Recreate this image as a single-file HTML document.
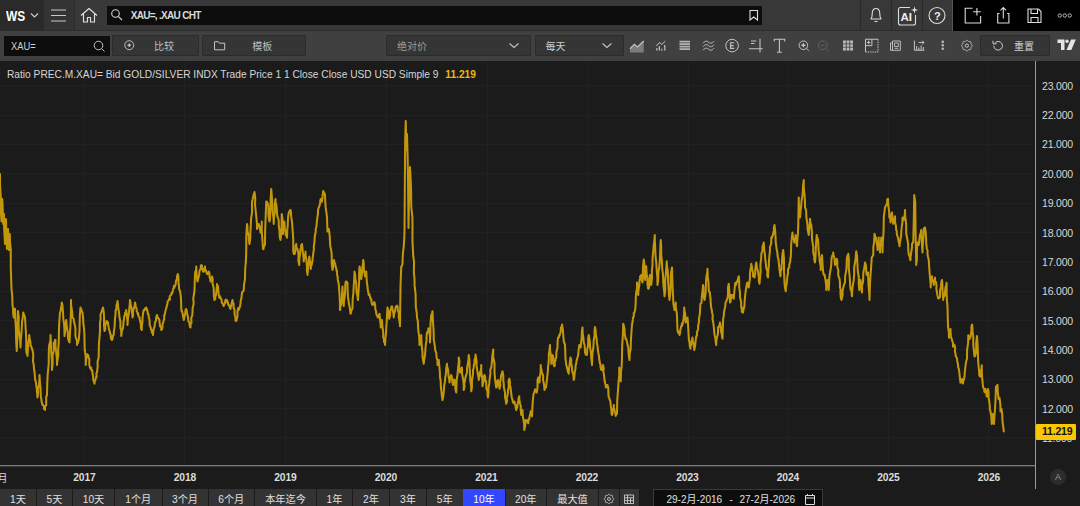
<!DOCTYPE html>
<html lang="zh"><head><meta charset="utf-8"><title>XAU=, .XAU CHT</title>
<style>
*{box-sizing:border-box;margin:0;padding:0}
html,body{width:1080px;height:506px;overflow:hidden;background:#1b1b1b}
body{position:relative;font-family:"Liberation Sans","Noto Sans CJK SC",sans-serif;color:#d8d8d8;font-size:11px}
.abs{position:absolute}
#top{position:absolute;left:0;top:0;width:1080px;height:31px;background:#383838;border-bottom:1px solid #2d2d2d}
#row2{position:absolute;left:0;top:31px;width:1080px;height:29.5px;background:#404040}
#ws{position:absolute;left:0;top:0;width:44px;height:30px;background:#2a2a2a}
#ws b{position:absolute;left:5.5px;top:7.6px;font-size:14px;color:#fff;transform:scaleX(0.85);transform-origin:0 0}
#ham{position:absolute;left:44px;top:0;width:30.5px;height:30px;background:#343434;border-right:1px solid #2c2c2c}
#search{position:absolute;left:107.2px;top:6px;width:655.3px;height:18.5px;background:#0d0d0d}
#search span{position:absolute;left:23.5px;top:3.5px;font-size:10px;color:#dadada;font-weight:bold;letter-spacing:-0.7px;white-space:nowrap}
.vd{position:absolute;top:0;width:1px;height:30px;background:#2a2a2a}
#blk{position:absolute;left:952px;top:0;width:128px;height:31px;background:#000;border-left:1px solid #555}
.inp{position:absolute;left:4px;top:35.5px;width:105.5px;height:20px;background:#0d0d0d}
.inp span{position:absolute;left:7.2px;top:5.5px;font-size:10.4px;transform:scaleX(0.9);transform-origin:0 0;color:#d0d0d0}
.btn{position:absolute;top:35px;height:20.5px;background:#353535;border:1px solid #2b2b2b;border-radius:1px;color:#bdbdbd;font-size:10px}
.btn span{position:absolute;top:2px;white-space:nowrap}
#title{position:absolute;left:7px;top:68.5px;font-size:10.2px;color:#d6d6d6;white-space:nowrap}
#title i{font-style:normal;font-weight:bold;color:#eab90f;margin-left:4px}
.yl{position:absolute;top:471.6px;width:40px;text-align:center;font-weight:bold;font-size:10.3px;color:#dcdcdc;letter-spacing:-0.1px}
.pl{position:absolute;left:1042px;width:38px;font-size:10.5px;color:#d8d8d8;height:14px;line-height:14px;letter-spacing:-0.2px}
.bb{position:absolute;top:489px;height:17px;background:#333;color:#e0e0e0;font-size:10.2px;text-align:center;line-height:22px;white-space:nowrap;overflow:hidden}
.bb.sel{background:#3347ff;color:#fff}
svg{position:absolute;left:0;top:0}
</style></head><body>
<svg width="1080" height="506" viewBox="0 0 1080 506">
<g stroke="#212121" stroke-width="1" shape-rendering="crispEdges"><line x1="84.5" y1="61" x2="84.5" y2="465" /><line x1="184.5" y1="61" x2="184.5" y2="465" /><line x1="285.5" y1="61" x2="285.5" y2="465" /><line x1="386" y1="61" x2="386" y2="465" /><line x1="487" y1="61" x2="487" y2="465" /><line x1="587.5" y1="61" x2="587.5" y2="465" /><line x1="688.5" y1="61" x2="688.5" y2="465" /><line x1="788.5" y1="61" x2="788.5" y2="465" /><line x1="888.5" y1="61" x2="888.5" y2="465" /><line x1="988.5" y1="61" x2="988.5" y2="465" /><line x1="0" y1="85.75" x2="1035" y2="85.75" /><line x1="0" y1="115.1" x2="1035" y2="115.1" /><line x1="0" y1="144.45" x2="1035" y2="144.45" /><line x1="0" y1="173.8" x2="1035" y2="173.8" /><line x1="0" y1="203.15" x2="1035" y2="203.15" /><line x1="0" y1="232.5" x2="1035" y2="232.5" /><line x1="0" y1="261.85" x2="1035" y2="261.85" /><line x1="0" y1="291.2" x2="1035" y2="291.2" /><line x1="0" y1="320.55" x2="1035" y2="320.55" /><line x1="0" y1="349.9" x2="1035" y2="349.9" /><line x1="0" y1="379.25" x2="1035" y2="379.25" /><line x1="0" y1="408.6" x2="1035" y2="408.6" /><line x1="0" y1="437.95" x2="1035" y2="437.95" /></g>
<path d="M0.00,174.00 L0.06,184.72 L0.75,196.50 L0.74,209.45 L1.50,221.50 L1.75,210.36 L2.25,199.00 L2.76,210.17 L3.25,224.00 L3.57,217.61 L4.00,214.00 L4.13,227.71 L5.00,244.00 L5.79,231.27 L6.00,219.00 L6.25,232.87 L7.00,249.00 L7.90,239.38 L8.00,229.00 L8.41,239.73 L9.00,250.00 L8.97,243.43 L9.75,234.00 L10.06,242.58 L10.75,249.00 L10.78,267.93 L11.50,289.00 L12.28,296.43 L12.50,305.00 L12.99,308.21 L13.22,313.75 L13.75,317.50 L13.77,314.73 L14.32,310.35 L15.00,308.75 L15.37,319.85 L15.95,329.32 L16.13,340.30 L16.75,351.00 L17.35,338.55 L17.65,323.57 L18.00,311.00 L18.71,317.08 L18.56,323.69 L18.78,330.44 L19.50,335.00 L20.23,341.00 L20.50,347.50 L20.87,340.21 L21.40,333.62 L21.69,329.54 L22.00,322.50 L22.25,320.29 L22.92,316.42 L23.25,312.50 L23.65,313.99 L24.53,316.02 L24.71,316.17 L25.00,317.50 L25.60,327.02 L26.28,339.61 L26.25,350.00 L26.47,352.97 L27.24,353.66 L27.50,356.00 L27.90,349.32 L28.03,344.50 L29.05,338.93 L29.25,335.00 L29.44,337.55 L30.42,342.01 L30.50,346.00 L30.85,345.54 L31.65,347.75 L32.03,349.36 L32.02,348.54 L32.50,350.00 L33.26,354.58 L33.02,361.37 L33.75,365.00 L33.93,368.20 L34.57,372.53 L35.00,377.50 L35.20,380.27 L35.76,381.01 L36.25,385.00 L36.73,388.77 L37.25,394.69 L37.50,397.50 L38.01,393.05 L37.90,389.03 L38.95,385.20 L39.37,380.62 L39.50,375.00 L39.83,381.34 L40.45,387.14 L40.75,395.00 L40.80,396.19 L41.32,399.13 L41.66,402.02 L42.50,405.00 L42.60,404.33 L43.21,405.47 L44.09,406.08 L43.85,408.68 L44.45,408.42 L45.00,410.00 L45.06,406.59 L46.24,405.05 L46.19,400.90 L46.24,396.76 L47.00,395.00 L47.23,384.53 L47.57,375.99 L48.72,363.57 L48.75,355.00 L48.87,350.08 L49.20,345.13 L50.49,340.08 L50.50,335.00 L51.05,344.84 L51.13,351.78 L51.87,360.25 L52.00,370.00 L52.69,363.22 L52.63,355.74 L53.75,350.31 L53.75,342.50 L54.46,342.93 L54.84,342.20 L55.08,339.81 L55.50,340.00 L55.45,345.82 L56.05,351.08 L56.80,358.03 L57.00,365.00 L57.39,360.74 L58.31,355.06 L58.19,349.49 L58.75,342.50 L58.92,331.66 L59.32,321.59 L60.00,312.50 L60.80,310.37 L60.86,308.52 L61.58,305.46 L61.75,302.50 L62.31,304.59 L62.84,310.40 L63.00,312.50 L63.36,319.13 L64.01,323.29 L64.40,329.62 L64.50,336.00 L64.84,333.41 L65.78,327.70 L65.52,324.67 L66.25,320.00 L66.37,323.26 L67.40,329.96 L67.86,332.06 L68.00,337.50 L68.52,340.19 L68.79,339.55 L68.69,340.14 L69.50,342.50 L70.01,333.29 L70.64,321.33 L70.96,310.43 L71.00,300.00 L71.11,305.35 L71.56,308.01 L72.20,312.35 L72.50,317.50 L72.86,318.03 L73.74,318.89 L73.77,320.81 L74.25,322.50 L75.01,325.96 L75.41,328.69 L75.46,332.15 L75.39,335.43 L75.93,338.39 L76.88,340.30 L77.00,345.00 L77.41,342.77 L77.93,343.18 L78.33,340.73 L78.75,340.00 L79.44,332.04 L79.68,322.57 L79.86,314.87 L80.50,307.50 L80.91,309.32 L81.53,309.69 L81.65,311.74 L82.10,311.84 L82.50,312.50 L83.07,318.04 L83.33,323.36 L84.10,328.93 L84.44,335.10 L84.50,340.00 L84.70,349.66 L85.73,356.85 L85.75,365.00 L85.84,362.69 L86.53,357.20 L87.00,355.00 L87.20,354.34 L88.03,354.97 L88.67,357.73 L88.75,357.50 L89.36,359.80 L89.26,364.65 L90.00,367.50 L90.82,369.15 L91.21,367.66 L91.19,368.69 L91.90,370.97 L92.00,370.00 L92.36,371.28 L92.69,374.63 L93.09,375.96 L93.23,379.83 L94.03,381.62 L94.50,383.75 L94.77,380.43 L95.34,380.37 L96.19,376.82 L96.59,377.12 L96.37,373.19 L97.00,372.50 L97.69,366.12 L97.54,361.81 L98.68,357.27 L98.75,352.50 L98.95,343.46 L99.96,331.45 L100.00,322.50 L100.60,319.38 L100.44,314.60 L101.25,312.50 L101.62,311.81 L102.52,308.72 L102.83,309.15 L103.00,307.50 L103.70,312.13 L104.08,317.95 L103.98,324.99 L104.50,331.00 L105.32,329.03 L105.04,326.05 L105.58,324.71 L106.25,322.50 L106.38,321.33 L106.86,321.15 L107.39,321.94 L108.00,322.50 L108.21,325.28 L108.51,326.50 L108.77,328.04 L109.16,329.75 L110.00,332.50 L110.45,334.70 L110.78,334.57 L110.85,338.30 L111.54,339.46 L112.00,340.00 L112.74,338.11 L112.88,335.93 L113.75,334.94 L113.75,332.50 L114.49,327.65 L114.75,324.37 L114.93,319.09 L115.50,315.00 L115.57,310.86 L116.52,308.11 L116.40,305.87 L117.41,302.55 L117.50,301.00 L118.05,305.41 L118.07,306.95 L118.66,310.28 L119.05,313.17 L119.50,317.50 L120.35,321.41 L120.42,328.17 L121.23,330.61 L121.25,336.00 L121.56,333.30 L122.02,330.25 L122.56,329.55 L123.00,327.50 L123.40,324.10 L123.59,321.01 L124.11,318.77 L124.17,316.13 L125.00,315.00 L125.18,312.75 L125.86,311.92 L126.25,310.00 L126.81,315.75 L127.42,320.65 L127.50,325.00 L127.76,320.50 L128.02,318.12 L128.88,313.17 L129.47,306.96 L129.70,305.34 L130.00,300.00 L130.70,303.62 L130.85,304.75 L131.55,308.76 L131.96,312.58 L132.44,314.84 L132.50,317.50 L133.09,315.55 L132.91,311.69 L133.62,308.90 L134.47,306.31 L134.70,305.18 L135.00,302.50 L135.58,304.55 L135.39,305.80 L136.47,308.39 L136.70,309.18 L136.69,311.31 L137.50,312.50 L137.68,314.21 L138.09,313.22 L138.43,316.19 L139.53,317.22 L139.50,317.50 L139.84,319.98 L140.57,322.44 L140.96,325.80 L140.92,327.93 L141.75,330.00 L141.93,324.94 L142.37,322.73 L142.51,318.20 L143.14,312.68 L143.75,310.00 L144.34,310.10 L144.40,309.69 L144.97,308.80 L145.07,308.23 L145.56,309.10 L146.25,307.50 L147.06,310.60 L147.05,309.39 L147.92,313.46 L147.71,314.02 L148.73,314.96 L148.75,317.50 L149.24,318.72 L149.60,320.59 L149.67,325.11 L150.42,326.79 L151.02,329.08 L151.25,330.00 L152.05,330.44 L151.70,332.46 L152.56,332.26 L153.00,335.00 L153.22,332.35 L153.66,328.92 L154.51,326.95 L154.83,323.51 L155.00,322.50 L155.06,322.02 L155.99,320.78 L156.01,319.20 L156.50,316.12 L157.00,315.00 L157.50,317.75 L157.77,317.08 L157.84,318.08 L158.97,318.81 L159.48,320.61 L159.50,322.50 L159.73,323.62 L160.10,326.28 L161.22,327.75 L161.25,330.00 L161.95,329.49 L162.46,327.06 L162.54,326.32 L162.51,323.99 L163.29,322.36 L163.75,320.00 L164.30,318.67 L164.18,315.19 L164.66,315.03 L165.28,311.58 L166.05,308.98 L166.25,307.50 L166.45,307.68 L166.90,305.47 L167.40,303.92 L167.61,301.50 L168.70,300.37 L168.75,300.00 L168.91,299.16 L170.03,299.55 L169.68,297.35 L170.05,295.74 L170.47,295.36 L171.25,295.00 L171.45,293.05 L172.43,292.88 L172.42,292.25 L172.94,290.07 L173.19,288.80 L173.75,288.00 L173.95,285.89 L174.21,287.80 L175.07,285.61 L175.09,285.89 L175.75,284.00 L175.92,281.31 L176.50,279.70 L177.26,279.36 L176.92,277.12 L177.75,274.00 L178.36,276.76 L178.56,283.52 L179.00,286.50 L179.05,289.01 L180.00,291.00 L180.80,296.17 L181.15,302.98 L181.25,307.50 L181.44,311.00 L181.77,310.49 L182.66,313.82 L183.12,317.16 L183.57,318.36 L183.75,320.00 L184.21,318.04 L184.84,314.95 L185.38,313.70 L185.24,313.10 L185.61,309.72 L186.25,309.00 L186.87,311.53 L186.74,312.09 L187.64,315.45 L188.00,317.50 L188.17,318.83 L188.39,321.14 L189.21,321.90 L189.80,325.54 L190.06,326.98 L190.50,327.50 L190.67,323.70 L191.48,322.88 L191.27,317.92 L192.26,315.49 L192.50,312.50 L192.68,307.76 L193.68,304.00 L193.28,298.18 L194.03,294.01 L194.50,290.00 L195.00,274.00 L195.14,272.05 L196.05,269.89 L196.25,266.50 L196.40,271.51 L196.91,277.91 L197.50,281.50 L197.70,280.59 L198.61,276.91 L199.22,275.26 L199.25,274.00 L199.37,272.19 L199.98,269.57 L200.85,269.10 L200.75,265.74 L201.25,265.00 L202.11,265.76 L201.72,267.18 L202.47,268.56 L203.00,271.50 L203.75,271.69 L204.25,270.20 L204.05,269.79 L204.99,266.56 L205.00,266.50 L204.98,268.74 L205.69,269.99 L206.05,270.62 L206.15,271.51 L207.00,274.00 L207.30,272.71 L207.54,274.12 L208.05,273.52 L208.75,271.50 L209.48,273.57 L209.56,277.47 L210.04,277.65 L210.50,281.50 L211.25,279.87 L211.13,278.08 L211.20,278.94 L212.00,276.50 L212.72,279.36 L212.46,283.55 L212.92,284.48 L213.75,289.00 L213.91,295.76 L214.50,300.00 L215.30,298.87 L215.17,295.77 L215.92,295.75 L216.25,292.50 L216.82,287.54 L217.00,284.00 L217.21,285.45 L218.06,286.51 L218.25,290.00 L218.75,295.00 L219.29,296.92 L219.16,297.66 L219.98,296.20 L220.83,299.04 L220.61,297.99 L221.25,299.00 L221.66,299.96 L221.80,302.62 L222.71,303.41 L223.16,304.63 L223.18,305.16 L223.75,306.00 L224.04,304.46 L224.20,304.85 L225.23,302.09 L225.02,301.24 L225.88,299.60 L226.25,300.00 L227.10,300.31 L227.52,302.82 L227.13,301.79 L227.92,302.12 L228.29,304.80 L228.75,305.00 L229.11,305.20 L229.78,307.36 L230.37,308.74 L230.50,309.00 L230.56,307.69 L231.11,306.42 L231.59,303.80 L231.83,302.51 L232.50,300.00 L232.67,301.74 L233.65,303.96 L233.54,307.73 L234.54,309.69 L234.50,312.50 L234.70,314.65 L235.51,317.68 L235.45,320.35 L236.25,321.00 L236.97,318.17 L237.50,316.52 L237.38,311.37 L238.00,310.00 L238.12,308.06 L238.87,309.82 L239.09,308.89 L239.55,307.90 L240.00,306.00 L240.69,302.53 L240.52,301.84 L241.42,298.04 L241.75,295.00 L242.03,293.15 L242.28,291.92 L243.04,291.26 L243.08,291.45 L243.75,290.00 L244.01,284.87 L244.30,283.20 L245.00,279.00 L245.15,269.27 L245.88,261.55 L246.25,251.50 L246.27,236.44 L247.00,224.00 L247.46,227.02 L247.47,231.08 L248.25,234.00 L248.84,236.32 L248.89,240.40 L249.50,244.00 L250.32,237.59 L250.39,231.77 L250.75,226.50 L251.09,218.57 L252.03,212.59 L252.00,204.00 L252.14,201.09 L252.57,199.68 L253.25,196.50 L254.03,193.52 L254.37,193.27 L254.50,192.00 L255.26,198.22 L255.03,204.88 L255.75,211.50 L256.21,215.88 L256.95,223.59 L257.00,229.00 L257.55,226.52 L257.88,226.11 L258.12,224.19 L258.75,224.00 L259.57,226.25 L259.62,227.20 L260.48,231.48 L260.50,232.75 L260.58,228.09 L261.76,226.58 L261.75,221.50 L261.76,230.61 L262.48,241.11 L263.00,249.00 L263.51,249.21 L263.49,247.97 L263.95,246.86 L264.91,244.71 L265.00,244.00 L265.13,230.82 L265.74,214.82 L266.25,201.50 L266.58,202.18 L266.90,201.62 L267.92,204.05 L268.00,204.00 L268.43,207.00 L268.33,213.52 L268.78,218.14 L269.50,221.50 L270.00,219.00 L270.46,209.30 L270.66,199.38 L271.25,189.00 L271.74,195.43 L272.23,202.11 L272.50,209.00 L272.86,213.84 L273.44,217.57 L273.75,224.00 L273.95,217.72 L274.88,212.29 L274.77,205.12 L275.50,199.00 L275.52,202.04 L276.19,204.14 L276.57,207.15 L277.00,211.50 L277.02,214.03 L277.50,216.91 L278.56,219.70 L278.75,221.50 L278.79,226.16 L279.52,230.76 L279.74,236.73 L280.50,240.00 L281.36,232.40 L281.62,223.36 L281.75,214.00 L282.60,219.75 L282.99,227.31 L283.00,234.00 L283.12,231.08 L284.22,226.53 L284.25,221.50 L284.53,223.53 L284.78,228.94 L285.50,231.50 L285.67,234.25 L285.93,235.57 L287.00,236.19 L287.00,237.75 L287.22,230.62 L287.71,225.27 L288.03,217.61 L288.75,212.75 L289.58,211.05 L289.98,211.91 L290.32,209.69 L290.50,210.00 L290.90,211.72 L291.12,216.16 L291.67,219.74 L292.00,221.50 L292.76,231.74 L293.28,240.31 L293.25,251.50 L293.57,252.72 L293.87,254.06 L294.50,254.00 L295.01,252.97 L295.61,248.58 L295.52,246.33 L296.25,244.00 L296.26,246.40 L296.86,248.29 L297.50,249.00 L298.37,253.42 L298.52,257.26 L298.36,260.44 L299.25,265.00 L299.35,258.27 L300.02,254.68 L300.50,249.00 L301.23,247.79 L301.00,245.40 L301.20,245.71 L302.00,244.00 L302.31,246.88 L302.75,251.57 L303.39,256.30 L303.75,261.50 L303.92,259.27 L304.60,256.87 L305.46,252.90 L305.50,251.50 L305.58,255.43 L306.42,259.69 L306.95,266.71 L306.89,270.01 L307.50,275.00 L308.07,268.91 L308.24,265.94 L308.76,261.56 L309.25,256.50 L309.84,260.94 L310.36,262.00 L310.40,264.51 L310.75,269.00 L310.95,266.84 L311.88,263.93 L312.11,261.91 L312.50,261.50 L312.58,258.82 L313.40,252.60 L313.83,249.52 L313.81,246.44 L314.50,241.50 L314.74,236.76 L315.68,231.81 L315.75,229.00 L316.38,226.72 L316.93,221.27 L317.03,220.36 L317.50,216.50 L317.89,214.73 L318.02,210.68 L318.40,208.20 L319.25,206.50 L319.85,204.13 L320.31,203.34 L320.16,201.51 L320.75,199.00 L321.11,199.99 L321.60,201.53 L322.00,201.50 L322.54,197.30 L322.58,195.90 L323.25,191.00 L323.25,193.14 L323.89,192.28 L324.96,194.73 L325.00,195.00 L325.26,201.24 L325.68,207.14 L326.25,211.50 L327.03,217.38 L327.26,225.23 L327.50,231.50 L328.35,231.16 L328.64,229.74 L328.75,229.00 L329.49,233.76 L329.79,237.14 L330.00,241.50 L330.26,246.09 L330.99,249.39 L331.68,253.36 L331.75,259.00 L331.70,263.43 L332.50,270.00 L333.26,266.32 L332.93,264.53 L333.21,261.09 L334.00,260.00 L334.50,262.20 L334.96,263.84 L335.21,263.57 L335.50,266.50 L336.16,267.97 L336.60,271.21 L336.96,270.82 L337.00,274.00 L337.84,277.74 L337.61,277.82 L337.89,280.34 L338.75,284.00 L339.45,293.71 L339.88,301.74 L340.00,310.00 L340.25,308.52 L340.51,305.05 L341.05,305.15 L341.75,302.50 L342.06,293.96 L342.50,286.50 L342.70,291.56 L343.53,298.85 L343.75,306.00 L343.99,300.70 L344.55,297.59 L345.06,292.35 L345.27,284.99 L345.75,281.50 L346.43,281.62 L346.81,281.67 L346.81,282.55 L347.50,282.75 L347.55,290.42 L348.04,296.88 L348.75,302.50 L348.92,303.82 L350.06,308.91 L350.05,309.45 L350.50,313.75 L351.17,312.47 L351.30,310.30 L352.00,309.54 L352.50,308.03 L352.50,307.50 L352.64,299.65 L353.30,293.70 L353.82,284.73 L354.36,277.44 L354.50,271.50 L355.20,275.22 L355.25,278.13 L355.72,280.58 L356.25,284.00 L356.32,289.17 L356.70,293.17 L357.35,295.12 L358.00,300.00 L358.38,292.83 L359.10,282.89 L359.09,274.08 L359.50,266.50 L360.17,269.72 L360.51,273.51 L360.66,275.42 L361.25,279.00 L361.96,274.17 L362.27,271.89 L362.39,266.61 L362.92,264.62 L363.25,260.00 L363.65,263.00 L363.89,269.41 L364.38,271.45 L365.00,276.50 L365.73,275.44 L365.52,272.13 L366.25,271.50 L366.51,275.74 L366.78,281.57 L367.50,286.50 L367.64,288.82 L368.54,293.59 L368.75,295.00 L369.60,294.43 L369.52,295.05 L370.33,298.33 L370.50,297.50 L370.84,299.70 L371.42,299.59 L371.44,300.82 L371.68,303.17 L372.50,305.00 L373.16,304.20 L373.30,304.58 L373.67,303.90 L374.19,301.93 L374.50,302.50 L375.15,305.03 L375.31,309.35 L376.04,311.16 L376.25,313.75 L376.44,314.45 L377.47,316.29 L377.74,317.38 L378.00,317.50 L378.54,317.62 L378.71,316.05 L379.24,314.13 L379.50,313.75 L379.84,317.13 L380.53,323.76 L380.75,327.50 L380.94,325.39 L381.54,322.27 L382.00,320.00 L382.34,326.20 L383.22,332.19 L383.25,337.50 L383.83,338.42 L384.02,342.08 L384.99,343.09 L385.00,345.00 L385.46,337.78 L386.09,332.32 L386.25,327.50 L386.68,322.16 L387.15,312.97 L387.50,307.50 L388.13,310.44 L388.50,313.16 L388.83,316.92 L389.25,318.75 L390.07,315.56 L390.25,312.05 L390.50,310.00 L391.11,308.74 L391.69,306.99 L391.23,306.75 L392.00,306.25 L392.35,308.39 L392.80,310.41 L393.49,314.45 L393.75,317.50 L393.98,314.56 L394.84,311.67 L395.09,311.32 L395.50,307.50 L396.17,306.41 L396.04,306.68 L396.95,305.64 L397.22,307.43 L397.50,306.25 L397.97,309.91 L398.75,312.93 L398.75,317.50 L399.29,319.98 L399.87,324.29 L400.00,326.25 L400.23,306.24 L400.50,286.56 L401.25,266.50 L401.54,266.67 L401.87,265.89 L402.50,264.00 L402.69,257.80 L403.05,252.11 L403.75,246.50 L404.32,237.51 L404.50,231.50 L405.00,164.00 L405.15,141.84 L405.75,121.00 L406.11,134.91 L406.50,150.00 L407.00,134.00 L407.62,156.79 L408.00,180.00 L408.50,228.00 L408.88,206.98 L409.50,185.00 L410.00,167.00 L410.74,181.29 L411.13,191.67 L411.25,206.00 L411.92,213.22 L412.38,216.92 L412.50,224.00 L412.44,240.40 L413.25,256.00 L414.07,262.20 L413.86,271.80 L414.50,279.00 L414.60,285.64 L415.58,293.87 L415.75,302.50 L415.85,307.04 L416.85,313.71 L417.00,317.50 L417.77,320.67 L418.09,326.16 L418.25,330.00 L419.02,335.51 L419.39,340.86 L419.50,345.00 L420.11,341.59 L420.59,340.09 L421.16,337.32 L421.25,335.00 L421.45,341.00 L421.76,345.87 L422.50,352.50 L422.52,356.23 L423.01,359.90 L423.75,363.75 L424.19,359.66 L424.95,355.74 L425.37,350.08 L425.50,347.50 L425.93,343.65 L426.56,340.50 L426.55,335.87 L427.00,332.50 L427.06,332.94 L428.00,331.04 L428.41,328.27 L428.75,328.75 L429.56,333.88 L430.02,337.41 L430.00,342.50 L430.40,333.37 L430.41,325.36 L431.25,315.00 L431.78,314.40 L432.41,312.02 L432.50,311.25 L432.89,320.43 L433.58,330.49 L433.75,340.00 L434.11,341.63 L434.63,344.77 L435.00,347.50 L435.23,350.15 L435.75,351.82 L436.25,352.50 L436.46,356.68 L437.51,360.85 L437.50,365.00 L438.18,363.80 L438.17,361.16 L438.75,360.00 L439.24,365.23 L439.84,372.07 L440.00,377.50 L440.62,380.29 L440.87,386.99 L441.25,390.00 L441.49,391.98 L441.80,395.19 L442.50,400.00 L443.04,397.51 L443.64,392.97 L443.91,389.98 L444.25,385.00 L444.74,382.85 L445.09,380.59 L445.12,378.04 L445.75,375.00 L446.13,371.75 L446.22,368.29 L447.00,363.75 L447.00,365.71 L448.21,370.41 L448.25,372.50 L448.55,376.30 L449.34,380.13 L449.50,382.50 L449.72,380.81 L450.30,378.16 L450.75,376.33 L451.25,375.00 L452.08,377.93 L452.19,378.66 L452.22,381.12 L453.00,385.00 L453.44,384.68 L453.70,383.76 L454.02,379.79 L454.50,380.00 L455.33,383.40 L455.35,387.69 L455.45,389.11 L456.25,392.50 L456.41,387.10 L456.65,379.79 L457.50,375.00 L458.08,367.68 L458.75,362.20 L458.75,357.50 L459.50,361.26 L459.15,366.39 L460.00,372.50 L460.17,372.16 L460.52,371.20 L461.45,368.15 L461.92,369.14 L462.00,367.50 L462.06,373.81 L463.06,379.14 L463.70,384.26 L463.75,390.00 L464.61,386.14 L464.19,384.40 L465.20,379.17 L465.50,377.50 L465.50,377.20 L466.46,374.43 L466.95,372.75 L467.00,372.50 L467.04,368.08 L467.94,363.35 L468.47,359.19 L468.75,355.00 L469.43,360.60 L469.71,367.92 L470.00,375.00 L470.34,380.81 L471.09,385.49 L471.25,391.25 L471.94,387.27 L471.94,380.83 L472.99,373.99 L473.00,370.00 L473.71,368.03 L473.93,364.33 L474.55,363.68 L474.49,359.97 L475.43,356.87 L475.50,354.50 L476.07,357.73 L476.66,362.01 L476.50,366.22 L476.89,367.41 L477.50,372.50 L477.99,374.77 L478.68,378.45 L478.75,380.00 L479.47,376.13 L479.91,375.94 L479.80,372.72 L480.69,371.05 L481.21,368.05 L481.25,365.00 L481.29,371.62 L482.35,379.33 L482.50,386.25 L483.13,383.10 L483.06,383.05 L483.86,379.82 L483.84,377.15 L484.50,375.00 L485.16,376.76 L485.34,380.87 L486.09,381.26 L486.25,385.00 L486.45,388.94 L487.48,391.49 L487.58,395.53 L488.00,397.50 L488.46,393.05 L488.47,387.82 L489.31,383.42 L489.50,380.00 L490.00,376.46 L490.39,373.46 L490.40,369.57 L491.25,367.50 L491.54,365.39 L492.17,359.12 L492.14,357.56 L492.71,353.39 L493.25,349.50 L493.24,357.23 L494.52,363.43 L494.50,372.50 L494.93,377.35 L495.16,380.20 L495.75,384.59 L496.25,387.50 L496.93,386.96 L497.54,384.71 L497.15,381.14 L498.00,380.00 L498.09,381.29 L498.35,383.13 L499.46,386.73 L499.50,388.75 L500.34,385.19 L499.98,383.10 L500.72,378.73 L501.25,375.00 L502.08,372.61 L502.14,371.77 L502.50,371.25 L503.33,375.84 L503.24,380.09 L503.75,383.75 L503.86,387.35 L505.03,392.65 L505.00,395.00 L505.00,397.08 L505.70,400.10 L506.25,403.75 L507.05,401.52 L506.72,397.89 L507.75,394.30 L508.00,390.00 L508.85,386.69 L508.51,381.17 L509.25,378.75 L510.02,382.33 L509.82,384.91 L510.61,387.46 L510.75,390.00 L511.03,391.32 L511.29,394.27 L511.76,397.44 L512.50,400.00 L512.58,399.97 L512.86,402.03 L513.43,402.90 L514.48,401.61 L514.50,403.75 L515.33,404.47 L515.72,407.98 L515.77,407.36 L516.25,410.00 L517.05,407.12 L517.20,407.69 L517.50,405.00 L517.79,402.67 L518.35,401.59 L518.49,398.82 L519.25,396.25 L519.23,398.85 L520.05,403.77 L520.71,405.50 L520.75,410.00 L521.25,415.00 L521.59,412.63 L521.88,410.63 L522.50,410.00 L522.79,416.02 L523.37,419.00 L524.18,424.45 L524.25,430.00 L525.06,426.34 L525.36,423.67 L525.12,423.00 L525.75,420.00 L526.00,420.56 L526.36,420.52 L527.50,421.47 L527.50,422.50 L528.32,423.06 L528.19,419.42 L528.41,420.88 L529.25,418.75 L529.44,417.55 L529.56,416.44 L530.23,414.05 L530.75,411.25 L530.72,411.84 L531.61,415.58 L532.00,416.25 L532.36,408.64 L532.58,404.15 L533.25,396.25 L533.36,394.90 L534.37,392.17 L534.29,392.20 L535.00,390.00 L535.07,389.36 L535.87,391.58 L536.05,391.20 L536.75,392.50 L537.31,389.09 L537.57,385.93 L537.48,380.36 L538.25,377.50 L538.58,379.86 L538.68,381.50 L539.50,382.50 L539.77,377.60 L540.66,371.86 L540.75,365.00 L540.75,367.17 L541.60,370.61 L541.85,372.68 L542.50,373.75 L543.20,376.06 L543.00,379.85 L543.79,383.11 L544.12,385.26 L544.50,390.00 L544.95,388.59 L545.57,386.36 L546.14,387.20 L546.25,385.00 L546.88,380.09 L547.35,375.89 L547.90,370.56 L548.00,367.50 L548.40,364.36 L548.83,358.54 L548.77,354.11 L549.35,350.90 L550.00,345.00 L550.06,350.30 L551.12,356.75 L551.25,363.75 L551.30,359.42 L551.81,358.51 L552.50,355.00 L553.03,356.37 L553.40,360.85 L553.46,364.05 L554.25,366.25 L554.85,365.61 L554.71,361.39 L555.45,360.98 L555.51,358.59 L556.25,357.50 L556.36,352.22 L557.45,347.78 L557.63,341.44 L558.00,337.50 L558.10,337.49 L559.19,336.98 L559.13,334.92 L559.62,335.52 L560.00,333.75 L560.80,331.59 L560.65,330.88 L561.05,327.42 L562.03,326.16 L562.00,324.50 L562.81,329.60 L563.19,333.82 L563.33,335.72 L563.75,341.25 L564.56,343.87 L564.51,343.00 L565.00,345.00 L565.29,352.06 L565.45,358.43 L566.25,365.00 L566.67,366.26 L566.76,366.48 L567.75,370.78 L568.04,372.14 L568.68,373.22 L568.75,373.75 L568.77,370.84 L569.41,366.05 L569.86,362.10 L570.50,357.50 L571.26,360.13 L571.03,362.86 L571.57,365.06 L572.00,367.50 L572.25,371.98 L573.01,373.17 L573.40,375.74 L573.75,380.00 L574.20,378.56 L574.59,373.68 L574.75,371.66 L575.50,368.75 L575.57,365.37 L576.22,363.63 L576.47,361.36 L577.14,358.51 L577.50,357.50 L578.04,355.39 L578.51,351.46 L579.00,347.23 L579.25,345.00 L579.67,345.51 L579.97,346.59 L580.14,346.31 L580.75,347.50 L581.20,341.66 L581.70,337.15 L581.93,331.04 L582.50,327.50 L582.68,333.59 L583.33,337.67 L583.75,342.50 L584.61,345.19 L584.83,348.55 L585.00,352.50 L585.01,351.98 L585.75,354.61 L586.10,352.69 L586.81,354.32 L587.00,355.00 L587.19,348.83 L588.09,346.38 L588.17,338.96 L588.75,335.00 L589.35,338.31 L589.94,342.85 L590.08,347.21 L590.50,350.00 L591.09,354.47 L591.23,358.28 L591.81,362.10 L592.00,365.00 L592.10,359.99 L592.43,353.61 L593.39,347.05 L593.75,340.00 L594.58,335.66 L594.51,331.55 L595.00,327.00 L595.77,331.10 L595.77,333.82 L596.27,336.61 L596.75,340.00 L596.94,343.79 L597.55,345.92 L597.71,349.03 L598.25,352.50 L599.00,356.17 L599.07,358.12 L599.39,359.99 L600.00,363.75 L600.51,364.25 L600.50,367.12 L601.15,369.70 L601.75,370.00 L602.47,369.36 L602.32,368.04 L603.00,365.00 L603.74,368.53 L603.34,371.03 L604.12,376.44 L604.50,380.00 L605.16,383.76 L605.78,385.12 L605.75,387.50 L606.20,386.93 L606.53,386.81 L607.15,385.20 L607.50,385.00 L608.32,388.72 L608.36,393.86 L608.75,397.50 L609.07,397.55 L609.68,399.70 L610.40,401.47 L610.50,402.50 L610.86,407.02 L611.36,408.57 L611.48,413.36 L612.00,415.00 L612.72,412.59 L612.71,409.01 L613.61,408.94 L613.75,405.00 L613.84,407.54 L614.80,411.18 L615.50,413.46 L615.50,415.00 L615.80,415.85 L616.06,413.34 L616.63,414.10 L617.00,413.75 L617.21,400.94 L618.00,390.00 L618.51,382.89 L619.28,374.56 L619.25,367.50 L619.21,371.35 L620.26,374.11 L620.55,377.23 L620.75,381.25 L620.99,371.85 L621.66,366.44 L622.00,357.50 L622.14,346.75 L622.88,334.99 L623.25,323.75 L623.82,325.86 L624.57,329.47 L624.48,332.41 L625.00,335.00 L625.09,335.36 L625.45,338.78 L625.90,338.30 L626.89,341.07 L627.00,342.50 L627.69,344.51 L627.39,344.52 L628.25,347.50 L628.51,352.48 L628.95,356.48 L629.50,360.00 L629.71,354.01 L630.70,348.80 L630.75,345.00 L631.03,338.58 L631.48,331.52 L632.00,325.00 L632.85,319.91 L633.00,317.50 L633.79,316.50 L633.86,314.82 L633.71,313.00 L634.50,312.50 L635.24,309.21 L635.69,302.78 L635.75,298.75 L635.99,294.28 L637.00,288.22 L637.00,282.50 L637.82,286.65 L637.73,290.06 L638.25,295.00 L638.42,290.66 L639.42,284.43 L639.50,280.00 L640.20,278.70 L640.08,276.73 L640.53,275.83 L641.25,275.00 L641.48,278.91 L641.74,280.18 L642.50,282.50 L642.81,274.93 L642.94,266.88 L643.75,259.50 L644.46,265.20 L644.35,272.72 L645.00,280.00 L645.22,274.49 L645.41,270.04 L646.25,266.25 L646.52,272.99 L647.27,277.72 L647.50,285.00 L647.71,285.03 L648.00,288.51 L648.75,288.75 L649.47,284.00 L649.28,280.50 L650.00,275.00 L650.62,277.89 L651.25,281.30 L651.25,285.00 L652.07,277.46 L651.84,271.68 L652.50,265.00 L652.58,258.19 L653.12,252.29 L653.75,245.00 L654.33,241.20 L654.75,235.00 L654.90,241.48 L655.24,249.07 L655.54,256.74 L656.25,262.50 L656.71,270.04 L657.33,276.81 L657.50,285.00 L658.08,280.28 L658.20,276.45 L658.44,271.54 L659.25,267.50 L659.94,259.66 L660.15,253.21 L660.43,245.70 L660.75,240.00 L661.17,247.08 L661.19,254.39 L662.00,262.50 L662.17,268.60 L663.03,274.71 L663.25,282.50 L663.58,286.43 L664.33,292.89 L664.50,296.25 L665.24,290.31 L665.13,280.98 L665.75,275.00 L666.41,266.71 L666.75,261.25 L667.03,266.32 L667.73,270.15 L668.00,275.00 L668.15,281.85 L668.62,288.54 L668.84,294.14 L669.50,300.00 L670.29,293.01 L670.52,289.04 L670.75,282.50 L670.75,276.12 L671.31,271.49 L672.00,267.50 L672.31,277.74 L672.66,287.78 L673.25,300.00 L673.38,303.75 L674.15,307.69 L674.50,310.00 L674.70,308.15 L675.50,304.80 L675.75,302.50 L675.72,307.05 L676.83,313.50 L677.00,317.50 L677.50,330.00 L677.49,330.36 L678.40,333.06 L678.47,331.64 L679.36,332.83 L679.50,335.00 L680.31,331.88 L680.00,331.25 L680.72,328.83 L681.25,326.00 L681.98,325.87 L681.76,323.59 L682.49,324.71 L683.00,322.50 L683.59,318.79 L684.13,313.22 L684.25,307.50 L684.58,311.63 L685.18,313.66 L685.39,318.54 L685.75,322.50 L685.85,322.53 L686.21,320.79 L687.34,319.36 L687.50,317.50 L687.96,323.45 L688.46,332.24 L688.75,337.50 L688.96,340.44 L689.50,341.80 L689.79,345.67 L690.50,348.75 L690.57,345.93 L691.45,344.87 L691.47,341.21 L692.05,339.80 L692.50,337.50 L692.80,341.93 L693.72,343.15 L693.87,345.80 L694.25,350.00 L694.93,346.75 L695.28,344.64 L695.60,340.76 L695.82,339.30 L696.25,336.25 L696.99,335.49 L696.94,331.97 L697.30,331.14 L698.00,330.00 L698.20,325.18 L698.98,322.09 L698.85,319.34 L699.57,315.47 L700.00,312.50 L700.14,308.34 L700.43,303.72 L701.54,302.73 L701.75,297.50 L702.36,292.09 L702.64,290.61 L703.00,285.00 L703.36,287.58 L703.47,292.30 L703.68,296.38 L704.50,300.00 L705.05,297.09 L705.73,292.05 L705.75,287.50 L705.96,283.27 L706.30,277.36 L707.31,272.02 L707.50,268.75 L707.73,276.85 L708.46,281.97 L708.75,290.00 L709.55,292.70 L709.84,292.34 L710.00,295.00 L710.66,299.74 L710.59,301.98 L711.15,307.23 L711.75,310.00 L712.17,312.73 L712.80,315.86 L712.46,318.59 L713.25,322.50 L713.87,327.70 L714.25,332.50 L714.84,335.96 L715.45,338.72 L715.45,339.98 L715.67,341.47 L716.25,345.00 L716.31,341.49 L716.82,338.06 L717.99,333.58 L718.00,330.00 L717.96,327.52 L718.47,327.32 L718.68,326.92 L719.50,325.00 L720.00,322.50 L720.74,326.86 L720.77,330.03 L721.25,332.50 L721.81,333.93 L722.01,336.71 L722.50,338.75 L722.82,327.64 L723.25,317.50 L723.98,315.50 L723.82,313.71 L724.51,309.39 L725.00,307.50 L725.30,305.82 L725.50,302.84 L726.28,301.35 L726.75,300.00 L727.52,298.16 L727.98,294.60 L728.06,291.64 L727.95,287.93 L728.75,283.75 L729.26,290.53 L729.65,295.64 L730.00,302.50 L730.38,302.36 L730.62,299.94 L731.55,297.53 L731.32,295.08 L732.00,295.00 L732.39,296.47 L733.02,295.63 L733.39,297.43 L733.75,298.75 L734.19,293.92 L734.49,289.78 L735.00,285.00 L735.11,283.34 L735.84,285.17 L736.53,282.34 L736.24,282.26 L737.00,282.50 L737.21,281.03 L737.92,279.34 L738.38,276.99 L738.75,276.25 L739.18,280.51 L739.21,287.35 L740.00,292.50 L740.03,297.22 L741.16,302.32 L741.25,307.50 L741.86,309.32 L741.74,311.60 L742.50,312.50 L743.10,312.47 L743.60,308.31 L743.40,307.68 L744.16,307.88 L744.50,305.00 L744.61,301.45 L744.98,297.08 L745.70,291.09 L746.25,287.50 L746.75,284.38 L746.90,283.31 L747.50,282.50 L747.85,284.79 L748.44,287.00 L748.75,287.50 L749.22,283.62 L749.92,278.75 L750.00,272.50 L750.64,268.59 L751.07,266.19 L751.25,263.75 L751.98,267.10 L752.01,268.24 L752.97,272.90 L753.00,275.00 L752.96,276.29 L753.39,276.56 L754.40,277.02 L754.50,277.50 L755.32,272.59 L755.15,270.53 L755.76,265.33 L756.25,262.50 L756.74,266.01 L756.65,266.34 L757.50,270.00 L758.17,271.58 L758.35,274.56 L758.87,277.62 L758.78,280.64 L759.50,283.75 L759.97,278.31 L760.65,271.19 L760.37,265.41 L761.25,257.50 L761.35,253.69 L762.42,250.84 L762.50,247.50 L762.50,246.73 L763.62,243.21 L763.75,242.50 L764.07,247.21 L764.28,250.76 L765.00,255.00 L765.32,260.20 L765.93,264.45 L766.25,267.50 L766.53,268.73 L767.48,271.65 L767.15,275.27 L768.00,277.50 L768.25,270.88 L768.82,266.15 L768.99,260.29 L769.50,255.00 L770.01,249.77 L769.94,247.00 L771.25,243.63 L771.25,240.00 L771.37,237.39 L771.92,238.01 L772.56,235.57 L773.00,235.00 L773.44,231.79 L774.16,230.08 L773.71,228.98 L774.50,225.00 L775.16,231.02 L775.58,237.78 L775.75,242.50 L776.31,246.02 L776.43,248.34 L777.40,252.76 L777.50,255.00 L778.08,258.82 L778.57,259.41 L778.75,262.50 L779.20,266.66 L779.49,269.78 L779.98,272.96 L780.50,276.25 L780.73,271.49 L781.69,268.84 L781.51,265.88 L782.00,262.50 L782.18,257.56 L782.51,253.71 L783.25,250.00 L784.00,259.36 L784.03,271.53 L784.50,282.50 L784.74,285.62 L784.94,287.34 L785.75,291.25 L786.02,286.59 L786.67,283.80 L786.92,280.37 L787.50,275.00 L788.01,273.76 L788.09,268.74 L789.25,267.74 L789.25,265.00 L789.87,262.70 L790.33,261.03 L790.36,258.08 L790.75,257.50 L790.99,252.45 L791.20,244.27 L791.85,237.74 L792.50,232.50 L792.68,235.61 L793.11,237.20 L794.14,240.31 L794.25,242.50 L794.39,240.44 L795.50,238.20 L795.50,235.00 L795.50,238.12 L796.59,241.55 L796.30,242.96 L797.00,246.25 L797.45,238.23 L797.96,233.21 L798.25,225.00 L798.75,197.50 L798.91,205.44 L799.81,210.31 L800.00,217.50 L800.33,213.78 L800.69,209.70 L801.25,205.00 L801.59,200.34 L802.20,196.97 L802.50,195.00 L802.91,189.50 L803.11,185.29 L803.75,180.00 L803.73,187.39 L804.64,196.28 L805.00,202.50 L805.02,207.46 L806.04,209.84 L806.25,213.00 L806.30,216.49 L806.76,219.97 L807.50,225.00 L807.55,229.13 L808.26,232.61 L808.75,235.00 L809.25,229.70 L809.72,224.33 L810.00,218.75 L810.26,221.14 L810.62,223.64 L811.25,225.00 L811.90,231.47 L811.91,237.49 L812.50,242.50 L813.35,247.48 L813.13,250.69 L813.75,255.00 L814.56,257.57 L814.14,258.90 L815.00,262.50 L815.58,255.55 L815.75,249.57 L816.07,243.34 L816.75,235.00 L816.76,237.64 L817.17,237.33 L817.88,239.31 L818.25,242.50 L818.38,247.67 L818.96,253.82 L819.50,257.50 L819.63,260.61 L820.71,266.55 L820.75,270.00 L820.74,263.99 L821.35,260.83 L822.00,255.00 L822.42,262.28 L822.69,267.08 L823.25,272.50 L823.65,274.65 L824.49,274.47 L824.77,275.07 L825.00,277.50 L825.55,280.36 L826.16,285.54 L826.25,290.00 L826.72,285.35 L827.46,283.06 L827.50,280.00 L828.03,284.67 L828.11,285.84 L828.75,290.00 L829.11,283.45 L829.32,277.53 L830.00,272.50 L830.57,269.53 L831.32,264.40 L831.38,260.40 L831.75,257.50 L832.45,255.22 L832.29,256.11 L833.17,254.50 L833.25,252.50 L833.54,254.97 L834.48,258.71 L834.73,260.86 L835.00,265.00 L835.40,263.73 L836.22,262.11 L836.66,259.44 L836.75,258.75 L837.38,261.77 L837.21,266.72 L838.32,270.15 L838.25,272.50 L838.26,275.64 L839.55,278.83 L839.93,282.28 L840.00,287.50 L840.59,289.58 L840.45,292.54 L840.76,297.42 L841.50,300.00 L842.31,296.39 L842.72,294.40 L842.39,292.06 L843.25,287.50 L843.95,285.45 L843.71,285.57 L844.32,283.76 L845.00,282.50 L845.08,276.67 L846.32,269.81 L846.65,265.07 L846.75,260.00 L847.11,257.30 L847.44,255.78 L848.04,254.35 L848.25,253.75 L848.88,259.78 L848.73,267.92 L849.50,275.00 L849.91,279.56 L850.20,286.26 L850.75,290.00 L851.59,291.23 L851.79,295.32 L852.00,296.25 L852.15,291.51 L852.49,287.42 L853.32,282.69 L853.75,280.00 L854.22,273.89 L854.14,267.92 L855.00,262.50 L855.55,259.31 L855.88,255.13 L856.25,251.25 L857.10,256.40 L857.28,261.54 L857.50,265.00 L857.77,270.95 L858.80,277.26 L858.71,283.41 L859.25,290.00 L859.35,286.40 L859.64,284.83 L860.50,280.00 L861.26,283.45 L861.35,285.51 L861.39,289.01 L862.00,292.50 L862.07,285.76 L863.09,281.86 L863.25,275.00 L863.28,273.10 L863.97,269.33 L864.61,266.06 L865.00,262.50 L865.86,265.07 L866.10,267.25 L866.32,272.94 L866.75,275.00 L867.61,274.44 L867.70,272.54 L868.00,272.50 L868.27,280.10 L868.65,286.89 L869.23,293.20 L869.50,300.00 L869.84,288.03 L870.50,275.00 L870.96,269.55 L871.43,262.50 L871.75,257.50 L872.49,256.17 L872.70,256.17 L872.85,255.69 L873.25,255.00 L873.34,247.08 L874.11,242.12 L874.50,233.75 L874.96,235.38 L875.14,237.82 L876.10,237.45 L876.25,240.00 L876.79,243.21 L877.44,247.65 L877.50,250.00 L877.51,246.94 L878.63,241.31 L878.75,237.50 L878.83,243.45 L879.36,246.46 L880.00,252.50 L880.29,246.31 L880.85,243.41 L881.25,237.50 L881.30,242.36 L882.53,247.19 L882.50,252.50 L882.87,242.25 L883.60,230.77 L883.75,220.00 L883.85,216.61 L884.46,212.21 L885.00,207.50 L885.20,206.94 L885.73,205.86 L885.88,205.27 L886.75,205.00 L887.23,202.02 L887.29,199.51 L888.00,198.75 L888.21,203.99 L888.60,207.39 L889.25,212.50 L889.30,216.84 L890.41,219.58 L890.50,222.50 L890.81,219.11 L891.36,218.38 L891.21,214.61 L892.00,212.50 L892.30,216.08 L892.65,220.64 L893.25,223.75 L893.82,221.60 L893.99,220.93 L894.63,217.78 L895.00,216.25 L895.14,222.11 L896.02,226.83 L896.25,230.00 L896.84,231.49 L896.74,233.24 L897.45,236.39 L898.00,237.50 L898.37,239.76 L898.98,243.08 L899.21,242.64 L899.50,246.25 L899.90,242.70 L900.30,240.39 L901.16,235.86 L901.25,232.50 L901.66,227.32 L902.38,222.54 L902.50,217.50 L903.13,218.84 L902.92,218.87 L903.75,220.00 L904.22,217.21 L904.83,214.14 L905.00,210.00 L905.17,216.35 L906.12,223.73 L906.25,232.50 L906.30,233.81 L907.14,238.26 L907.50,240.00 L908.08,243.67 L908.32,250.63 L908.75,255.00 L909.36,254.91 L909.70,257.25 L910.35,260.24 L910.50,260.00 L910.56,257.37 L911.27,252.00 L912.06,247.27 L912.00,245.00 L912.20,243.49 L912.61,242.77 L913.25,242.50 L913.80,219.83 L914.25,195.00 L914.68,198.78 L915.25,202.50 L915.57,232.40 L916.25,265.00 L916.94,258.60 L916.86,251.07 L917.50,242.50 L917.51,242.44 L918.22,244.28 L918.75,245.00 L919.16,241.56 L919.46,238.58 L920.00,235.00 L920.15,234.24 L920.88,232.92 L921.25,230.00 L921.50,236.15 L922.00,245.10 L922.50,252.50 L922.76,244.78 L923.60,235.99 L923.75,228.75 L924.36,227.71 L924.67,228.82 L925.00,227.50 L925.81,233.20 L926.17,239.00 L926.25,245.00 L926.61,245.34 L926.68,248.75 L927.50,250.00 L927.53,254.42 L928.05,256.96 L928.75,260.00 L929.22,267.10 L929.58,272.57 L930.00,277.50 L930.53,283.02 L930.75,287.50 L930.91,283.13 L931.26,281.01 L932.00,276.25 L932.17,279.69 L932.51,279.43 L933.72,283.67 L933.75,285.00 L934.31,282.24 L934.95,279.27 L935.00,277.50 L935.09,281.06 L935.98,282.17 L936.50,285.13 L936.36,288.88 L937.00,292.50 L937.27,294.25 L937.56,295.68 L938.15,298.24 L938.75,298.50 L938.85,298.36 L940.02,297.06 L940.00,295.00 L939.98,290.81 L940.93,286.91 L941.20,283.40 L941.64,280.87 L942.00,280.00 L942.37,285.45 L942.74,294.02 L943.20,300.00 L943.25,298.54 L943.66,296.99 L944.85,295.27 L944.82,293.32 L945.20,290.00 L945.53,286.97 L946.13,285.95 L946.60,282.80 L946.68,296.19 L947.50,307.00 L948.00,326.50 L948.83,332.08 L949.00,337.75 L949.41,335.86 L949.43,332.14 L950.48,330.50 L950.50,329.00 L950.67,333.37 L950.91,336.94 L951.75,339.00 L952.59,341.80 L952.98,343.53 L953.00,346.50 L952.97,346.66 L953.70,345.37 L954.34,344.80 L954.50,345.25 L955.18,347.62 L954.95,351.31 L955.75,355.25 L955.80,356.68 L956.84,357.90 L957.00,359.00 L957.38,362.20 L957.85,363.43 L958.25,367.75 L958.80,368.63 L959.15,370.81 L959.50,374.00 L959.89,377.93 L960.50,382.75 L960.57,382.30 L961.65,379.88 L961.93,379.43 L962.00,379.00 L962.48,382.37 L963.00,383.50 L963.01,380.70 L963.41,381.14 L964.16,378.24 L964.50,376.50 L964.89,371.19 L965.37,367.16 L965.75,364.00 L966.05,362.35 L966.50,359.76 L967.00,359.00 L967.08,350.19 L968.17,342.39 L968.25,335.25 L969.02,336.51 L969.48,336.30 L969.50,339.00 L970.18,337.72 L970.50,336.71 L970.75,335.25 L971.39,330.85 L971.37,327.04 L972.00,324.50 L972.32,327.09 L972.65,332.55 L973.25,336.50 L973.29,344.34 L973.84,350.07 L974.50,356.50 L975.17,355.95 L974.94,355.47 L975.75,354.00 L976.26,347.24 L976.17,343.45 L977.00,336.00 L977.67,346.60 L978.00,356.50 L978.27,362.86 L978.80,368.26 L979.25,372.75 L979.23,375.26 L980.00,376.57 L980.50,376.50 L980.55,372.47 L981.54,368.23 L981.75,365.25 L981.85,372.87 L982.26,378.95 L983.00,386.50 L983.16,387.26 L984.26,389.33 L984.25,391.50 L984.93,392.16 L985.08,389.77 L985.50,389.00 L986.28,392.34 L986.46,394.75 L986.75,396.50 L987.28,393.10 L987.84,392.54 L988.00,389.00 L988.61,391.94 L988.53,396.88 L989.25,401.50 L989.82,406.23 L989.75,408.90 L990.50,411.50 L991.31,416.65 L991.55,421.05 L991.75,424.00 L992.44,421.66 L992.53,417.60 L993.00,414.00 L993.76,419.98 L994.00,424.00 L994.32,417.61 L995.00,409.00 L995.53,399.13 L996.00,386.50 L996.03,387.53 L997.01,387.28 L997.43,384.82 L997.50,385.25 L997.73,391.32 L998.50,399.00 L998.76,398.25 L999.50,397.75 L1000.37,404.60 L1000.50,411.50 L1001.19,410.81 L1001.50,409.00 L1002.26,414.93 L1002.50,421.50 L1003.08,425.71 L1003.63,429.49 L1003.75,431.50" fill="none" stroke="#c3970c" stroke-width="2.05" stroke-linejoin="round" stroke-linecap="round"/>
<line x1="1035.5" y1="61" x2="1035.5" y2="489" stroke="#9a9a9a" stroke-width="1"/>
<line x1="0" y1="465.75" x2="1035" y2="465.75" stroke="#9a9a9a" stroke-width="1"/>
</svg>
<div id="top">
 <div id="ws"><b>WS</b>
  <svg width="44" height="30"><path d="M31 13.5 L34.5 17 L38 13.5" fill="none" stroke="#d0d0d0" stroke-width="1.1"/></svg>
 </div>
 <div id="ham"><svg width="30" height="30"><path d="M7 10H22M7 15.500H22M7 21H22" stroke="#c8c8c8" stroke-width="1.100"/></svg></div>
 <svg width="30" height="30" style="left:74px"><path d="M7 15.500 L15 8.500 L23 15.500 M9.500 14 V22 H13.500 V17.500 H16.500 V22 H20.500 V14" fill="none" stroke="#e0e0e0" stroke-width="1.150" stroke-linejoin="round"/></svg>
 <div id="search">
  <svg width="20" height="18.5" style="left:1px;top:-0.7px"><circle cx="7.500" cy="8.500" r="3.800" fill="none" stroke="#d4d4d4" stroke-width="1.100"/><path d="M10.300 11.300 L14 15" stroke="#d4d4d4" stroke-width="1.100"/></svg>
  <span>XAU=, .XAU CHT</span>
  <svg width="14" height="18.5" style="left:640px"><path d="M3 4.500 H10.500 V14 L6.750 11 L3 14 Z" fill="none" stroke="#dcdcdc" stroke-width="1.100"/></svg>
 </div>
 <div class="vd" style="left:860px"></div><div class="vd" style="left:891px"></div><div class="vd" style="left:922px"></div>
 <svg width="30" height="30" style="left:861px"><path d="M10 19 C11.500 17.500 11 15 11.300 12.500 C11.600 10 13 8.500 15 8.500 C17 8.500 18.400 10 18.700 12.500 C19 15 18.500 17.500 20 19 Z" fill="none" stroke="#dcdcdc" stroke-width="1.100" stroke-linejoin="round"/><path d="M13.500 21.500 H16.500" stroke="#dcdcdc" stroke-width="1.100"/></svg>
 <svg width="30" height="30" style="left:892px;top:0.5px"><path d="M18 6.500 H8.500 Q6.500 6.500 6.500 8.500 V22 Q6.500 24 8.500 24 H21.500 Q23.500 24 23.500 22 V14" fill="none" stroke="#dcdcdc" stroke-width="1.100"/><path d="M22.500 5.200 L23.300 8.200 L26.300 9 L23.300 9.800 L22.500 12.800 L21.700 9.800 L18.700 9 L21.700 8.200 Z" fill="#e6e6e6"/><text x="8.500" y="20" font-family="Liberation Sans, sans-serif" font-weight="bold" font-size="11.500" fill="#eee">AI</text></svg>
 <svg width="30" height="30" style="left:921.6px"><circle cx="15" cy="15.500" r="8" fill="none" stroke="#dcdcdc" stroke-width="1.100"/><text x="12" y="19.500" font-family="Liberation Sans, sans-serif" font-weight="bold" font-size="11" fill="#eee">?</text></svg>
 <div id="blk">
  <svg width="127.5" height="30">
   <g fill="none" stroke="#dcdcdc" stroke-width="1.100">
   <path d="M19.500 8.300 H12.200 V23 H27.600 V16"/><path d="M23.900 8 V15.600 M20.100 11.800 H27.700"/>
   <path d="M46.500 13.500 H44.700 V23 H55.900 V13.500 H54.100 M50.300 18.500 V7.500 M47.500 10.300 L50.300 7.500 L53.100 10.300"/>
   <path d="M75 9 H85.500 L88 11.500 V22.500 H75 Z M78 9 V13.500 H84.500 V9 M78 22.500 V17.500 H85 V22.500"/>
   </g>
   <g fill="none" stroke="#c4c4c4" stroke-width="0.900"><circle cx="106.750" cy="15.500" r="1.700"/><circle cx="111.750" cy="15.500" r="1.700"/><circle cx="116.750" cy="15.500" r="1.700"/></g>
  </svg>
 </div>
</div>
<div id="row2"></div>
<div class="inp"><span>XAU=</span><svg width="20" height="20" style="left:86px"><circle cx="8.500" cy="9.500" r="4.300" fill="none" stroke="#c4c4c4" stroke-width="1"/><path d="M11.700 12.700 L14.500 15.500" stroke="#c4c4c4" stroke-width="1"/></svg></div>
<div class="btn" style="left:112px;width:86.5px"><svg width="20" height="18" style="left:8px;top:0"><circle cx="8.250" cy="9.200" r="4.500" fill="none" stroke="#c4c4c4" stroke-width="0.950"/><path d="M8.250 7.400 V11 M6.450 9.200 H10.050" stroke="#c4c4c4" stroke-width="1.300"/></svg><span style="left:41px">比较</span></div>
<div class="btn" style="left:202px;width:104px"><svg width="20" height="18" style="left:9px;top:0"><path d="M2.500 5.700 H6.300 L7.400 7.200 H12.700 V13.800 H2.500 Z" fill="none" stroke="#c4c4c4" stroke-width="1"/></svg><span style="left:49.2px">模板</span></div>
<div class="btn" style="left:386px;width:145px;color:#9a9a9a"><span style="left:10px">绝对价</span><svg width="20" height="18" style="left:118px;top:0"><path d="M4.500 7.500 L9 11.500 L13.500 7.500" fill="none" stroke="#c4c4c4" stroke-width="1.100"/></svg></div>
<div class="btn" style="left:534.5px;width:89px;color:#cfcfcf"><span style="left:10px">每天</span><svg width="20" height="18" style="left:62px;top:0"><path d="M4.500 7.500 L9 11.500 L13.500 7.500" fill="none" stroke="#c4c4c4" stroke-width="1.100"/></svg></div>
<svg width="360" height="31" viewBox="625 30 360 31" style="left:625px;top:30px" id="icons">
 <g fill="none" stroke="#c4c4c4" stroke-width="1">
  <path d="M630 52.500 V48.750 L634.400 44.400 L637.500 46.900 L643.750 41 V52.500 Z" fill="#7c7c7c" stroke="none"/>
  <path d="M630 48.750 L634.400 44.400 L637.500 46.900 L643.750 41" stroke-width="1.200"/>
  <path d="M656.900 50.600 V48 M659.400 50.600 V46.300 M661.900 50.600 V48.700 M664.750 50.600 V45" stroke-width="1.200"/>
  <path d="M656.200 46.200 L659.400 42.500 L661.900 44.400 L665.200 41.200"/>
  <path d="M679.500 41.600 H690 M679.500 44.100 H690 M679.500 46.600 H690 M679.500 49.100 H690" stroke="#b4b4b4" stroke-width="1.900"/>
  <path d="M703 43.200 C705 40.700 707 40.700 708.500 42.200 C710 43.700 712 43.700 714 41.200 M703 46.700 C705 44.200 707 44.200 708.500 45.700 C710 47.200 712 47.200 714 44.700 M703 50.200 C705 47.700 707 47.700 708.500 49.200 C710 50.700 712 50.700 714 48.200" stroke-width="0.950"/>
  <circle cx="732.100" cy="45.600" r="6.300"/><path d="M734.200 42.800 H730.600 V48.400 H734.200 M730.600 45.600 H733.600" stroke-width="1.100"/>
  <path d="M749 48.750 H762.750 M760 38.750 V52.500 M751 41 H756.250 M751 43.500 H754.400" stroke-width="1.100"/>
  <path d="M774.300 41.500 V39.200 H784.700 V41.500 M779.400 39.200 V52.200 M777 52.300 H781.800" stroke-width="1.100"/>
  <circle cx="803.400" cy="45.250" r="4.300"/><path d="M806.500 48.400 L808.800 50.700" /><path d="M801.400 45.250 H805.400 M803.400 43.250 V47.250" stroke-width="1.300"/>
  <g stroke="#626262"><circle cx="822.750" cy="45.250" r="4.300"/><path d="M825.850 48.400 L828.500 51 M820.750 45.250 H824.750"/></g>
  <path d="M843 40.500 H853 V50.500 H843 Z" fill="#b8b8b8" stroke="none"/>
  <path d="M843 43.900 H853 M843 47.200 H853 M846.300 40.500 V50.500 M849.700 40.500 V50.500" stroke="#404040" stroke-width="0.800"/>
  <path d="M865.500 52 V39.250 H878" /><path d="M878 39.250 V52 H865.500" stroke-dasharray="1.400 1"/>
  <path d="M865.500 45.600 H871.900 V39.250 M867 42.400 H870.400 M868.700 40.700 V44.100"/>
  <path d="M892.500 41 H900.300 V50.300 H890.500 V43 H892.500 Z M892.500 43 V50.300" stroke-width="0.950"/><path d="M894.500 43 H898.300 V46.500 H894.500 Z M894.500 48.300 H898.300" stroke-width="0.900"/>
  <path d="M914.400 40.600 V50.250 H924.400 M916.700 50 V46 M918.900 50 V47.500 M921.100 50 V45.500 M923.300 50 V47 M918.750 42.500 H924 M922.200 40.700 L924 42.500 L922.200 44.300"/>
 </g>
 <g fill="#b4b4b4"><circle cx="942.750" cy="41.900" r="1.300"/><circle cx="942.750" cy="45.300" r="1.300"/><circle cx="942.750" cy="48.750" r="1.300"/></g>
 <g fill="none" stroke="#c4c4c4" stroke-width="1"><circle cx="966.900" cy="45.600" r="1.600"/><path d="M972.20,45.60 L972.14,45.94 L971.96,46.27 L971.71,46.56 L971.44,46.82 L971.21,47.06 L971.06,47.32 L970.98,47.61 L970.97,47.95 L970.97,48.32 L970.95,48.70 L970.84,49.06 L970.65,49.35 L970.36,49.54 L970.00,49.65 L969.62,49.67 L969.25,49.67 L968.91,49.68 L968.62,49.76 L968.36,49.91 L968.12,50.14 L967.86,50.41 L967.57,50.66 L967.24,50.84 L966.90,50.90 L966.56,50.84 L966.23,50.66 L965.94,50.41 L965.68,50.14 L965.44,49.91 L965.18,49.76 L964.89,49.68 L964.55,49.67 L964.18,49.67 L963.80,49.65 L963.44,49.54 L963.15,49.35 L962.96,49.06 L962.85,48.70 L962.83,48.32 L962.83,47.95 L962.82,47.61 L962.74,47.32 L962.59,47.06 L962.36,46.82 L962.09,46.56 L961.84,46.27 L961.66,45.94 L961.60,45.60 L961.66,45.26 L961.84,44.93 L962.09,44.64 L962.36,44.38 L962.59,44.14 L962.74,43.88 L962.82,43.59 L962.83,43.25 L962.83,42.88 L962.85,42.50 L962.96,42.14 L963.15,41.85 L963.44,41.66 L963.80,41.55 L964.18,41.53 L964.55,41.53 L964.89,41.52 L965.18,41.44 L965.44,41.29 L965.68,41.06 L965.94,40.79 L966.23,40.54 L966.56,40.36 L966.90,40.30 L967.24,40.36 L967.57,40.54 L967.86,40.79 L968.12,41.06 L968.36,41.29 L968.62,41.44 L968.91,41.52 L969.25,41.53 L969.62,41.53 L970.00,41.55 L970.36,41.66 L970.65,41.85 L970.84,42.14 L970.95,42.50 L970.97,42.88 L970.97,43.25 L970.98,43.59 L971.06,43.88 L971.21,44.14 L971.44,44.38 L971.71,44.64 L971.96,44.93 L972.14,45.26Z"/></g>
</svg>
<div class="btn" style="left:980px;width:70px;color:#d0d0d0"><svg width="20" height="18" style="left:7px;top:0"><path d="M5.800 9.800 A4.300 4.300 0 1 0 7.200 6.600" fill="none" stroke="#cfcfcf" stroke-width="1"/><path d="M4.800 4.800 L5.300 8.100 L8.600 7.600" fill="none" stroke="#cfcfcf" stroke-width="1"/></svg><span style="left:33px">重置</span></div>
<svg width="30" height="31" style="left:1052px;top:30px"><g fill="#e4e4e4"><path d="M5.500 9.500 H12.500 V20 H9 V13 H5.500 Z"/><circle cx="15" cy="11.300" r="1.700"/><path d="M19 9.500 H23.800 L19.300 20 H14.500 Z"/></g></svg>
<div id="title">Ratio PREC.M.XAU= Bid GOLD/SILVER INDX Trade Price 1 1 Close Close USD USD Simple 9 <i>11.219</i></div>
<div class="pl" style="top:78.75px">23.000</div><div class="pl" style="top:108.1px">22.000</div><div class="pl" style="top:137.45px">21.000</div><div class="pl" style="top:166.8px">20.000</div><div class="pl" style="top:196.15px">19.000</div><div class="pl" style="top:225.5px">18.000</div><div class="pl" style="top:254.85000000000002px">17.000</div><div class="pl" style="top:284.2px">16.000</div><div class="pl" style="top:313.55px">15.000</div><div class="pl" style="top:342.9px">14.000</div><div class="pl" style="top:372.25px">13.000</div><div class="pl" style="top:401.6px">12.000</div><div class="pl" style="top:430.95px">11.000</div>
<div class="abs" style="left:1036px;top:424.1px;width:40.3px;height:15.5px;background:#fbc702;color:#111;font-weight:bold;font-size:10.5px;line-height:15px;padding-left:6px;border-radius:1px;letter-spacing:-0.2px">11.219</div>
<div class="abs" style="left:-2.5px;top:469.5px;font-size:10px;color:#dcdcdc">月</div>
<div class="yl" style="left:64.5px">2017</div><div class="yl" style="left:165px">2018</div><div class="yl" style="left:265.5px">2019</div><div class="yl" style="left:366px">2020</div><div class="yl" style="left:466.5px">2021</div><div class="yl" style="left:567px">2022</div><div class="yl" style="left:667.5px">2023</div><div class="yl" style="left:768px">2024</div><div class="yl" style="left:868.5px">2025</div><div class="yl" style="left:969px">2026</div>
<div class="abs" style="left:1050px;top:468.8px;width:16px;height:16px;border-radius:8px;background:#2c2c2c;color:#9a9a9a;font-size:9px;text-align:center;line-height:16px">A</div>
<div class="bb" style="left:0px;width:36px">1天</div><div class="bb" style="left:37px;width:35px">5天</div><div class="bb" style="left:73px;width:41px">10天</div><div class="bb" style="left:115px;width:46.5px">1个月</div><div class="bb" style="left:162.5px;width:45.0px">3个月</div><div class="bb" style="left:208.5px;width:45.5px">6个月</div><div class="bb" style="left:255px;width:61px">本年迄今</div><div class="bb" style="left:317px;width:35px">1年</div><div class="bb" style="left:353px;width:36px">2年</div><div class="bb" style="left:390px;width:36px">3年</div><div class="bb" style="left:427px;width:35.5px">5年</div><div class="bb sel" style="left:463px;width:42px">10年</div><div class="bb" style="left:505.5px;width:40.5px">20年</div><div class="bb" style="left:547px;width:51px">最大值</div>
<div class="bb" style="left:599px;width:20px"><svg width="20" height="17"><circle cx="10" cy="10" r="1.500" fill="none" stroke="#ccc" stroke-width="0.900"/><path d="M14.80,10.00 L14.72,10.31 L14.51,10.59 L14.22,10.84 L13.91,11.05 L13.66,11.24 L13.51,11.45 L13.47,11.71 L13.51,12.02 L13.58,12.39 L13.61,12.77 L13.56,13.12 L13.39,13.39 L13.12,13.56 L12.77,13.61 L12.39,13.58 L12.03,13.51 L11.71,13.47 L11.45,13.51 L11.24,13.66 L11.05,13.91 L10.84,14.22 L10.59,14.51 L10.31,14.72 L10.00,14.80 L9.69,14.72 L9.41,14.51 L9.16,14.22 L8.95,13.91 L8.76,13.66 L8.55,13.51 L8.29,13.47 L7.98,13.51 L7.61,13.58 L7.23,13.61 L6.88,13.56 L6.61,13.39 L6.44,13.12 L6.39,12.77 L6.42,12.39 L6.49,12.02 L6.53,11.71 L6.49,11.45 L6.34,11.24 L6.09,11.05 L5.78,10.84 L5.49,10.59 L5.28,10.31 L5.20,10.00 L5.28,9.69 L5.49,9.41 L5.78,9.16 L6.09,8.95 L6.34,8.76 L6.49,8.55 L6.53,8.29 L6.49,7.98 L6.42,7.61 L6.39,7.23 L6.44,6.88 L6.61,6.61 L6.88,6.44 L7.23,6.39 L7.61,6.42 L7.97,6.49 L8.29,6.53 L8.55,6.49 L8.76,6.34 L8.95,6.09 L9.16,5.78 L9.41,5.49 L9.69,5.28 L10.00,5.20 L10.31,5.28 L10.59,5.49 L10.84,5.78 L11.05,6.09 L11.24,6.34 L11.45,6.49 L11.71,6.53 L12.03,6.49 L12.39,6.42 L12.77,6.39 L13.12,6.44 L13.39,6.61 L13.56,6.88 L13.61,7.23 L13.58,7.61 L13.51,7.97 L13.47,8.29 L13.51,8.55 L13.66,8.76 L13.91,8.95 L14.22,9.16 L14.51,9.41 L14.72,9.69Z" fill="none" stroke="#ccc" stroke-width="0.900"/></svg></div>
<div class="bb" style="left:620px;width:18.5px"><svg width="18" height="17"><path d="M4.500 6 H13.500 V14.500 H4.500 Z M4.500 8.800 H13.500 M4.500 11.600 H13.500 M7.500 6 V14.500 M10.500 8.800 V14.500" fill="none" stroke="#ccc" stroke-width="0.900"/></svg></div>
<div class="abs" style="left:652.500px;top:489px;width:170px;height:20px;background:#0d0d0d;border:1px solid #3a3a3a;color:#e0e0e0;font-size:10px;line-height:20px;white-space:nowrap"><span class="abs" style="left:13px">29-2月-2016</span><span class="abs" style="left:76px">-</span><span class="abs" style="left:86px">27-2月-2026</span><svg width="16" height="18" style="left:148px"><path d="M3.500 5.500 H12.500 V14.500 H3.500 Z M3.500 8 H12.500 M5.500 4 V6 M10.500 4 V6" fill="none" stroke="#ddd" stroke-width="1"/></svg></div>
</body></html>
